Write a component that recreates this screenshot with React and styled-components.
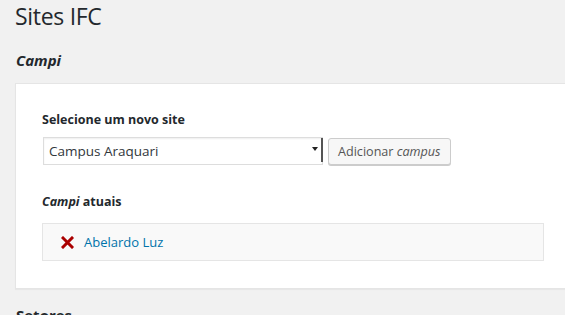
import React from 'react'
import styled, { createGlobalStyle } from 'styled-components'

const GlobalStyle = createGlobalStyle`
  html, body {
    margin: 0;
    padding: 0;
    background: #f1f1f1;
    font-family: "Open Sans", "Noto Sans", sans-serif;
    color: #23282d;
    overflow: hidden;
  }
`

/* STYLES */
const Wrap = styled.div`
  padding: 0 0 0 15px;
  width: 565px;
  height: 315px;
  box-sizing: border-box;
`

const Title = styled.h1`
  margin: 0;
  padding: 3px 0 0 0;
  font-size: 23px;
  font-weight: 400;
  line-height: 27px;
  letter-spacing: -0.3px;
`

const Section = styled.h2`
  margin: ${p => p.top}px 0 0 1px;
  font-size: 15px;
  font-weight: 700;
  line-height: 20px;
  font-style: ${p => (p.italic ? 'italic' : 'normal')};
`

const Card = styled.div`
  margin-top: 13px;
  background: #fff;
  border: 1px solid #e5e5e5;
  border-right: none;
  box-shadow: 0 1px 1px rgba(0, 0, 0, 0.04);
  padding: 28px 20px 26px 26px;
  height: 206px;
  box-sizing: border-box;
`

const Label = styled.div`
  font-size: 12.5px;
  font-weight: 700;
  line-height: 16px;
  margin-bottom: 9px;

  em {
    font-style: italic;
  }
`

const Row = styled.div`
  display: flex;
  align-items: center;
  gap: 5px;
`

const SelectBox = styled.div`
  position: relative;
  width: 280px;
  height: 28px;
  margin-left: 1px;
  box-sizing: border-box;
  border: 1px solid #ddd;
  box-shadow: inset 0 1px 2px rgba(0, 0, 0, 0.07);
  background: #fff;
  display: flex;
  align-items: center;
  padding-left: 5px;
  font-size: 13.5px;
  color: #32373c;

  &::before {
    content: '';
    position: absolute;
    right: 4px;
    top: 9px;
    width: 0;
    height: 0;
    border-left: 3px solid transparent;
    border-right: 3px solid transparent;
    border-top: 4px solid #222;
  }

  &::after {
    content: '';
    position: absolute;
    right: -1px;
    top: 0;
    bottom: 2px;
    width: 2px;
    background: #555;
  }
`

const Button = styled.button`
  height: 27px;
  padding: 0 9px;
  border: 1px solid #ccc;
  border-radius: 3px;
  background: #f7f7f7;
  box-shadow: 0 1px 0 #ccc;
  color: #555;
  font-family: inherit;
  font-size: 12.6px;
  line-height: 25px;
  white-space: nowrap;

  em {
    font-style: italic;
  }
`

const Current = styled(Label)`
  margin-top: 29px;
  margin-bottom: 13px;
`

const List = styled.div`
  width: 502px;
  height: 38px;
  box-sizing: border-box;
  border: 1px solid #e5e5e5;
  background: #f9f9f9;
  display: flex;
  align-items: center;
  padding-left: 18px;
  gap: 10px;
`

const Link = styled.a`
  color: #0073aa;
  font-size: 13px;
  text-decoration: none;
`

const Remove = () => (
  <svg width="13" height="13" viewBox="0 0 13 13">
    <path d="M2 2 L11 11 M11 2 L2 11" stroke="#a00" strokeWidth="3" strokeLinecap="square" />
  </svg>
)

/* PRESENTATION */
export default function App() {
  return (
    <Wrap>
      <GlobalStyle />
      <Title>Sites IFC</Title>
      <Section italic top={20}>Campi</Section>
      <Card>
        <Label>Selecione um novo site</Label>
        <Row>
          <SelectBox>Campus Araquari</SelectBox>
          <Button>
            Adicionar <em>campus</em>
          </Button>
        </Row>
        <Current>
          <em>Campi</em> atuais
        </Current>
        <List>
          <Remove />
          <Link href="#">Abelardo Luz</Link>
        </List>
      </Card>
      <Section top={16}>Setores</Section>
    </Wrap>
  )
}
